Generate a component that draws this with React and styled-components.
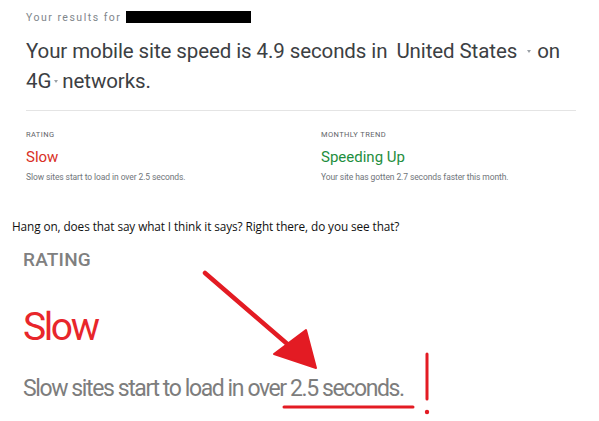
import styled, { createGlobalStyle } from "styled-components";

const GlobalStyle = createGlobalStyle`
  html, body {
    margin: 0;
    padding: 0;
    background: #ffffff;
  }
  body {
    font-family: Roboto, "Noto Sans", sans-serif;
  }
`;

const Page = styled.div`
  position: relative;
  width: 599px;
  height: 421px;
  overflow: hidden;
  background: #fff;
`;

const ResultsCard = styled.section`
  padding: 11px 0 0 26px;
  width: 550px;
`;

const ResultsFor = styled.div`
  display: flex;
  align-items: center;
  gap: 5px;
  height: 12px;
  font-size: 10.5px;
  letter-spacing: 1.5px;
  color: #80868b;
`;

const Redacted = styled.span`
  display: inline-block;
  width: 125px;
  height: 12px;
  background: #000;
`;

const Headline = styled.h1`
  margin: 13px 0 0;
  font-size: 20.5px;
  font-weight: 400;
  line-height: 30px;
  color: #3c4043;
  letter-spacing: -0.1px;
`;

const Picker = styled.span`
  display: inline-flex;
  align-items: center;
  margin-left: ${(p) => p.$lead || 0}px;
`;

const Caret = styled.span`
  display: inline-block;
  width: 0;
  height: 0;
  margin: 1px ${(p) => p.$right || 6}px 0 ${(p) => p.$left || 4}px;
  border-left: 2.5px solid transparent;
  border-right: 2.5px solid transparent;
  border-top: 3px solid #9aa0a6;
`;

const Divider = styled.hr`
  margin: 14px 0 0;
  border: 0;
  border-top: 1px solid #e4e4e4;
`;

const Metrics = styled.div`
  display: grid;
  grid-template-columns: 295px 1fr;
  padding-top: 19px;
`;

const Metric = styled.div`
  display: flex;
  flex-direction: column;
`;

const MetricLabel = styled.div`
  font-size: 7.5px;
  letter-spacing: 0.4px;
  color: #5f6368;
  line-height: 10px;
`;

const MetricValue = styled.div`
  margin-top: 8px;
  font-size: 15px;
  line-height: 18px;
  color: ${(p) => p.$tone};
`;

const MetricNote = styled.div`
  margin-top: 6px;
  font-size: 8.5px;
  line-height: 10px;
  letter-spacing: -0.1px;
  color: #70757a;
`;

const Caption = styled.p`
  margin: 37px 0 0 12px;
  font-family: "Open Sans", "Liberation Sans", sans-serif;
  font-size: 11.8px;
  line-height: 15px;
  letter-spacing: -0.1px;
  color: #111;
`;

const Closeup = styled.section`
  padding: 15px 0 0 23px;
  color: #7a7a7a;
`;

const CloseLabel = styled.div`
  font-size: 19px;
  font-weight: 500;
  line-height: 22px;
  letter-spacing: 0.2px;
  color: #808080;
`;

const CloseValue = styled.div`
  margin-top: 34px;
  font-size: 39px;
  line-height: 44px;
  letter-spacing: -2.4px;
  color: #e8262b;
`;

const CloseNote = styled.div`
  margin-top: 26px;
  font-size: 23px;
  line-height: 28px;
  letter-spacing: -1.4px;
  color: #7d7d7d;
`;

const Annotation = styled.svg`
  position: absolute;
  inset: 0;
  pointer-events: none;
`;

export default function App() {
  const red = "#e31b23";
  return (
    <Page>
      <GlobalStyle />
      <ResultsCard>
        <ResultsFor>
          Your results for <Redacted />
        </ResultsFor>
        <Headline>
          Your mobile site speed is 4.9 seconds in
          <Picker $lead={9}>
            United States
            <Caret $left={10} $right={6} />
          </Picker>
          on{" "}
          <Picker>
            4G
            <Caret $left={3} $right={4} />
          </Picker>
          networks.
        </Headline>
        <Divider />
        <Metrics>
          <Metric>
            <MetricLabel>RATING</MetricLabel>
            <MetricValue $tone="#d93025">Slow</MetricValue>
            <MetricNote>Slow sites start to load in over 2.5 seconds.</MetricNote>
          </Metric>
          <Metric>
            <MetricLabel>MONTHLY TREND</MetricLabel>
            <MetricValue $tone="#1e8e3e">Speeding Up</MetricValue>
            <MetricNote>Your site has gotten 2.7 seconds faster this month.</MetricNote>
          </Metric>
        </Metrics>
      </ResultsCard>
      <Caption>
        Hang on, does that say what I think it says? Right there, do you see that?
      </Caption>
      <Closeup>
        <CloseLabel>RATING</CloseLabel>
        <CloseValue>Slow</CloseValue>
        <CloseNote>Slow sites start to load in over 2.5 seconds.</CloseNote>
      </Closeup>
      <Annotation width="599" height="421" viewBox="0 0 599 421">
        <line x1="205" y1="273" x2="292" y2="348" stroke={red} strokeWidth="4.5" strokeLinecap="round" />
        <polygon points="274,354 306,330 316,368" fill={red} stroke={red} strokeWidth="2" strokeLinejoin="round" />
        <line x1="284" y1="407" x2="413" y2="407" stroke={red} strokeWidth="3" strokeLinecap="round" />
        <line x1="427" y1="354" x2="427" y2="399" stroke={red} strokeWidth="3" strokeLinecap="round" />
        <circle cx="427" cy="412" r="2.2" fill={red} />
      </Annotation>
    </Page>
  );
}
